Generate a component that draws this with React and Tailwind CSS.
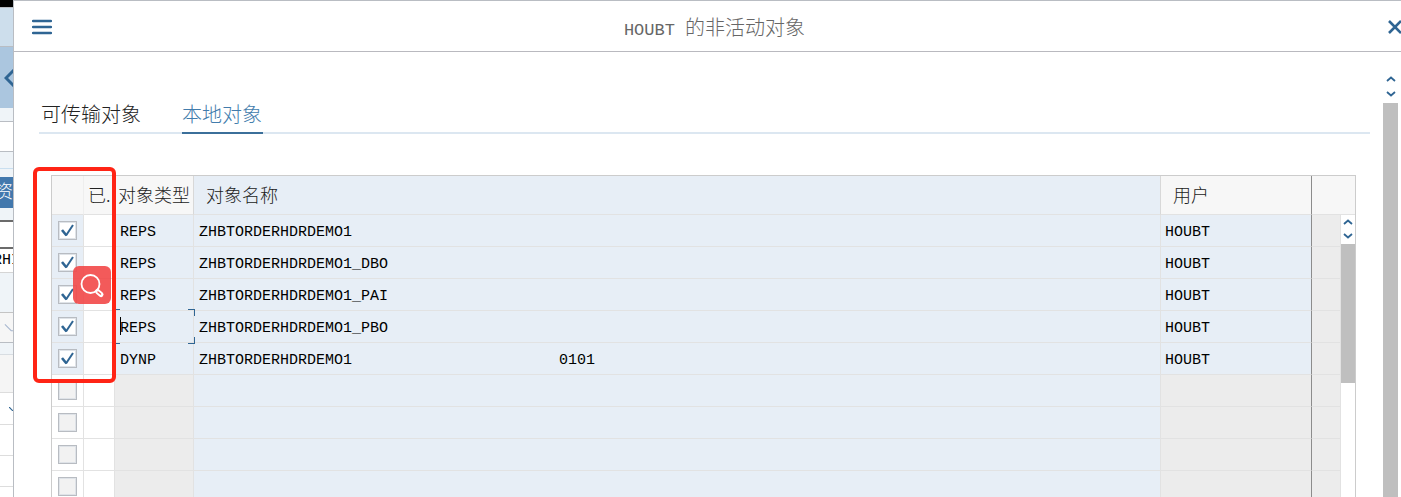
import { useState } from "react";

const initialRows = [
  { id: 1, type: "REPS", name: "ZHBTORDERHDRDEMO1", user: "HOUBT" },
  { id: 2, type: "REPS", name: "ZHBTORDERHDRDEMO1_DBO", user: "HOUBT" },
  { id: 3, type: "REPS", name: "ZHBTORDERHDRDEMO1_PAI", user: "HOUBT" },
  { id: 4, type: "REPS", name: "ZHBTORDERHDRDEMO1_PBO", user: "HOUBT", focused: true },
  { id: 5, type: "DYNP", name: "ZHBTORDERHDRDEMO1".padEnd(40) + "0101", user: "HOUBT" },
  { id: 6 },
  { id: 7 },
  { id: 8 },
  { id: 9 },
];

function Chevron({ className, d }) {
  return (
    <svg viewBox="0 0 10 6" className={className} fill="none" stroke="#2f6593" strokeWidth="1.800">
      <path d={d} />
    </svg>
  );
}

function ScrollArrows({ className }) {
  return (
    <div className={className}>
      <button aria-label="Scroll up" className="block">
        <Chevron className="w-[10px] h-[6px]" d="M1 5L5 1.5L9 5" />
      </button>
      <button aria-label="Scroll down" className="block">
        <Chevron className="w-[10px] h-[6px]" d="M1 1L5 4.5L9 1" />
      </button>
    </div>
  );
}

// Window behind the dialog, only its left edge is visible
function BackgroundWindow() {
  return (
    <div className="w-[13px] shrink-0 overflow-hidden bg-white">
      <div className="h-[7px] bg-black" />
      <div className="h-10 border-y border-[#b9bdc3] bg-[#cddeec]" />
      <div className="h-[61px] bg-[#abc6df] flex items-center pl-1">
        <svg viewBox="0 0 9 18" className="w-[9px] h-[18px]" fill="none" stroke="#2f6593" strokeWidth="3">
          <path d="M10 1L2 9L10 17" />
        </svg>
      </div>
      <div className="h-[14px] border-b border-[#b9bdc3] bg-[#eff4f8]" />
      <div className="h-[30px] border-b border-[#b9bdc3]" />
      <div className="h-[17px] border-b border-[#c9dff0] bg-[#eff4f8]" />
      <div className="h-2 bg-[#eff4f8]" />
      <div className="h-[31px] bg-[#4278ad] text-white text-[18px] leading-8 flex justify-end">资</div>
      <div className="h-[14px] border-b-2 border-[#6b6b6b] bg-[#eff4f8]" />
      <div className="h-[27px] border-b-2 border-[#6b6b6b]" />
      <div className="h-6 border-b border-[#d5d5d5] text-black text-[15px] leading-6 flex justify-center">RHI</div>
      <div className="h-10 border-b border-[#c4c4c4] bg-[#eff4f8]" />
      <div className="h-[30px] border-b border-[#b9bdc3] bg-[#f6f6f6] flex items-center pl-1">
        <svg viewBox="0 0 10 8" className="w-[10px] h-2" fill="none" stroke="#a9b8d0" strokeWidth="1.200">
          <path d="M1 0L8 7L10 7" />
        </svg>
      </div>
      <div className="h-3 border-b border-[#d8dde2] bg-[#eff4f8]" />
      <div className="h-[38px] border-b border-[#dddddd] bg-[#f5f5f5]" />
      <div className="h-8 border-b border-[#dddddd] flex items-center justify-end">
        <svg viewBox="0 0 4 4" className="w-1 h-1" fill="none" stroke="#2f6593" strokeWidth="1.200">
          <path d="M0 0L4 4" />
        </svg>
      </div>
      <div className="h-[31px] border-b border-[#dddddd]" />
      <div className="h-[31px] border-b border-[#dddddd]" />
    </div>
  );
}

function Checkbox({ label, checked, disabled, onChange }) {
  return (
    <label className="relative block w-[19px] h-[19px] ml-[6px]">
      <input
        type="checkbox"
        aria-label={label}
        checked={checked}
        disabled={disabled}
        onChange={onChange}
        className="block appearance-none w-[19px] h-[19px] border border-[#b8bcc2] bg-white disabled:bg-[#f2f2f2] outline-1 -outline-offset-2 outline-[#dfe3e8]"
      />
      {checked && (
        <svg viewBox="0 0 19 19" className="absolute inset-0 pointer-events-none" fill="none" stroke="#2f6593">
          <path d="M4 9L8.500 14.500" strokeWidth="2.600" />
          <path d="M8 14.500L15 4" strokeWidth="2" />
        </svg>
      )}
    </label>
  );
}

// Corner marks and caret of the cell that has the cursor
function CellFocus() {
  return (
    <div className="absolute -top-[2px] left-0 -right-[2px] h-[35px] pointer-events-none">
      <span className="absolute top-0 left-0 w-[5px] border-t border-[#2f6593]" />
      <span className="absolute bottom-0 left-0 w-[5px] border-b border-[#2f6593]" />
      <span className="absolute top-0 right-0 w-[7px] h-[7px] border-t border-r border-[#2f6593]" />
      <span className="absolute bottom-0 right-0 w-[7px] h-[7px] border-b border-r border-[#2f6593]" />
      <span className="absolute top-2 left-[5px] w-px h-[18px] bg-black" />
    </div>
  );
}

function ObjectTable() {
  const [selected, setSelected] = useState([1, 2, 3, 4, 5]);

  const toggle = (id) => {
    setSelected((prev) => (prev.includes(id) ? prev.filter((x) => x !== id) : [...prev, id]));
  };

  const th = "pb-[2px] border-b border-[#e2e2e2] text-left font-light whitespace-nowrap";
  const td = "pt-1 border-b border-r border-[#e2e2e2]";

  return (
    <div className="relative ml-3 mr-[14px] border-t border-x border-[#cccccc]">
      <table className="w-full table-fixed border-separate border-spacing-0">
        <colgroup>
          <col className="w-8" />
          <col className="w-[31px]" />
          <col className="w-[79px]" />
          <col />
          <col className="w-[151px]" />
          <col className="w-[29px]" />
          <col className="w-[14px]" />
        </colgroup>
        <thead className="font-['Noto_Sans_CJK_SC',sans-serif]">
          <tr className="h-[39px] bg-[#f7f7f7] text-[18px] leading-6 text-[#222]">
            <th className={`${th} border-r border-r-[#eeeeee]`} />
            <th className={`${th} pl-1`}>已.</th>
            <th className={`${th} pl-[3px] border-r border-r-[#d8d8d8]`}>对象类型</th>
            <th className={`${th} pl-3 bg-[#e7eef6] border-r border-r-[#d8d8d8]`}>对象名称</th>
            <th className={`${th} pl-3 border-r border-r-[#8c8c8c]`}>用户</th>
            <th className={th} colSpan={2} />
          </tr>
        </thead>
        <tbody className="text-[15px] leading-5 text-black font-normal">
          {initialRows.map((row, i) => (
            <tr key={row.id} className="h-8">
              <td className={`border-b border-r border-[#e2e2e2] ${row.type ? "bg-[#e7eef6]" : "bg-white"}`}>
                <Checkbox
                  label={row.name || `Row ${row.id}`}
                  checked={selected.includes(row.id)}
                  disabled={!row.type}
                  onChange={() => toggle(row.id)}
                />
              </td>
              <td className={`${td} bg-white`} />
              <td
                className={`${td} pl-[5px] ${row.focused ? "relative z-10" : ""} ${
                  row.type ? "bg-[#e7eef6]" : "bg-[#ececec]"
                }`}
              >
                {row.type}
                {row.focused && <CellFocus />}
              </td>
              <td className={`${td} pl-[5px] bg-[#e7eef6] whitespace-pre`}>{row.name}</td>
              <td className={`${td} pl-1 border-r-[#8c8c8c] ${row.type ? "bg-[#e7eef6]" : "bg-[#ececec]"}`}>
                {row.user}
              </td>
              <td className={`${td} bg-[#ececec]`} />
              {i === 0 && (
                <td rowSpan={initialRows.length} className="align-top bg-white">
                  <ScrollArrows className="h-[29px] pt-1 flex flex-col items-center gap-2" />
                  <div className="h-[139px] bg-[#bfbfbf]" />
                </td>
              )}
            </tr>
          ))}
        </tbody>
      </table>

      {/* Highlight around the selection column */}
      <div className="absolute z-20 -top-[9px] -left-[19px] w-[83px] h-[216px] border-4 border-[#ff2415] rounded-md pointer-events-none" />
      <button
        aria-label="Search"
        className="absolute z-20 top-[90px] left-[21px] w-[38px] h-[38px] rounded-md bg-[#f24848]/90 flex items-center justify-center"
      >
        <svg viewBox="0 0 38 38" className="w-[38px] h-[38px]" fill="none" stroke="#fff" strokeLinecap="round">
          <circle cx="17.500" cy="18" r="9" strokeWidth="1.800" />
          <path d="M24.500 25.500L28 28.500" strokeWidth="5" />
          <path d="M25 26L27.500 28" stroke="#f45a5a" strokeWidth="1.500" />
        </svg>
      </button>
    </div>
  );
}

export default function App() {
  const [tab, setTab] = useState("local");

  const tabs = [
    { key: "transport", label: "可传输对象" },
    { key: "local", label: "本地对象" },
  ];

  return (
    <div className="h-screen overflow-hidden flex bg-white font-light font-['Liberation_Mono','Noto_Sans_CJK_SC',monospace]">
      <BackgroundWindow />

      <div className="flex-1 min-w-0 flex flex-col border-l border-t border-[#b9bdc3] bg-white">
        <header className="h-[51px] shrink-0 pt-[2px] flex items-center border-b border-[#b9b9bf]">
          <button aria-label="Menu" className="ml-[18px]">
            <svg viewBox="0 0 20 16" className="w-5 h-4" stroke="#2f6593" strokeWidth="2.400" strokeLinecap="round">
              <path d="M1 2H19M1 8H19M1 14H19" />
            </svg>
          </button>
          <h1 className="flex-1 pt-[6px] text-center text-[#666]">
            <span className="text-[17px]">HOUBT </span>
            <span className="text-[20px]">的非活动对象</span>
          </h1>
          <button aria-label="Close" className="w-6 flex justify-end overflow-hidden">
            <svg viewBox="0 0 13 14" className="w-[13px] h-[14px]" stroke="#2f6593" strokeWidth="2.600">
              <path d="M1 1L13 13M13 1L1 13" />
            </svg>
          </button>
        </header>

        <div className="flex-1 min-h-0 flex">
          <main className="flex-1 min-w-0 pl-[25px] pt-[46px]">
            <nav className="flex gap-10 pl-[2px] mb-[41px] h-9 border-b-2 border-[#dce7f1]">
              {tabs.map((t) => (
                <button
                  key={t.key}
                  onClick={() => setTab(t.key)}
                  className={`h-9 pr-px pt-1 text-[20px] leading-7 border-b-2 ${
                    tab === t.key ? "text-[#427cac] border-[#3b6f9a]" : "text-[#222] border-transparent"
                  }`}
                >
                  {t.label}
                </button>
              ))}
            </nav>
            <ObjectTable />
          </main>

          <aside className="w-[15px] shrink-0 ml-[13px] mr-[3px] flex flex-col">
            <ScrollArrows className="h-[51px] pt-6 flex flex-col items-center gap-[9px]" />
            <div className="flex-1 bg-[#bfbfbf]" />
          </aside>
        </div>
      </div>
    </div>
  );
}
